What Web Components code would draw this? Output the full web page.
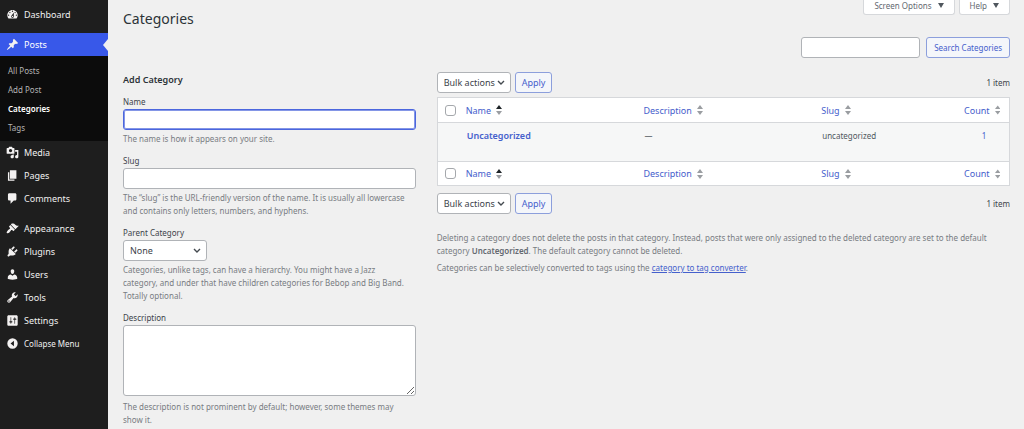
<!DOCTYPE html>
<html lang="en">
<head>
<meta charset="utf-8">
<meta name="viewport" content="width=device-width, initial-scale=1">
<title>Categories</title>
<style>
  :root {
    --bg: #f0f0f0;
    --menu: #1e1e1e;
    --submenu: #0c0c0c;
    --accent: #3858e9;
    --link: #4560cc;
    --text: #3c434a;
    --muted: #787c82;
    --field-border: #b0b3b7;
    --line: #d6d8db;
  }
  body {
    margin: 0;
    background: var(--bg);
    color: var(--text);
    font: 8px/13px "Noto Sans", "Open Sans", sans-serif;
  }
</style>
</head>
<body>
<admin-shell>
  <admin-menu slot="menu">
    <menu-item icon="dashboard" label="Dashboard"></menu-item>
    <menu-item icon="post" label="Posts" current class="gap">
      <sub-item label="All Posts"></sub-item>
      <sub-item label="Add Post"></sub-item>
      <sub-item label="Categories" current></sub-item>
      <sub-item label="Tags"></sub-item>
    </menu-item>
    <menu-item icon="media" label="Media"></menu-item>
    <menu-item icon="page" label="Pages"></menu-item>
    <menu-item icon="comments" label="Comments"></menu-item>
    <menu-item icon="appearance" label="Appearance" class="gap"></menu-item>
    <menu-item icon="plugins" label="Plugins"></menu-item>
    <menu-item icon="users" label="Users"></menu-item>
    <menu-item icon="tools" label="Tools"></menu-item>
    <menu-item icon="settings" label="Settings"></menu-item>
    <menu-item icon="collapse" label="Collapse Menu" small></menu-item>
  </admin-menu>

  <page-head slot="head" heading="Categories"></page-head>
  <search-box slot="search"></search-box>

  <add-form slot="form" heading="Add Category">
    <form-field label="Name" active>The name is how it appears on your site.</form-field>
    <form-field label="Slug">The “slug” is the URL-friendly version of the name. It is usually all lowercase and contains only letters, numbers, and hyphens.</form-field>
    <form-field label="Parent Category" type="select" value="None">Categories, unlike tags, can have a hierarchy. You might have a Jazz category, and under that have children categories for Bebop and Big Band. Totally optional.</form-field>
    <form-field label="Description" type="textarea">The description is not prominent by default; however, some themes may show it.</form-field>
  </add-form>

  <bulk-nav slot="list"></bulk-nav>
  <category-table slot="list"></category-table>
  <bulk-nav slot="list"></bulk-nav>
  <list-notes slot="list"></list-notes>
</admin-shell>

<script>
const ICONS = {
  dashboard: 'M3.76 16h12.48c1.1-1.37 1.76-3.11 1.76-5 0-4.42-3.58-8-8-8s-8 3.58-8 8c0 1.89.66 3.63 1.76 5zM10 4c.55 0 1 .45 1 1s-.45 1-1 1-1-.45-1-1 .45-1 1-1zM6 6c.55 0 1 .45 1 1s-.45 1-1 1-1-.45-1-1 .45-1 1-1zm8 0c.55 0 1 .45 1 1s-.45 1-1 1-1-.45-1-1 .45-1 1-1zm-5.37 5.55L12 7v6c0 1.1-.9 2-2 2s-2-.9-2-2c0-.57.24-1.08.63-1.45zM4 10c.55 0 1 .45 1 1s-.45 1-1 1-1-.45-1-1 .45-1 1-1zm12 0c.55 0 1 .45 1 1s-.45 1-1 1-1-.45-1-1 .45-1 1-1zm-5 3c0-.55-.45-1-1-1s-1 .45-1 1 .45 1 1 1 1-.45 1-1z',
  post: 'M10.44 3.02l1.82-1.82 6.36 6.35-1.83 1.82c-1.05-.68-2.48-.57-3.41.36l-.75.75c-.92.93-1.04 2.35-.35 3.41l-1.83 1.82-2.41-2.41-2.8 2.79c-.42.42-3.38 2.71-3.8 2.29s1.86-3.39 2.28-3.81l2.79-2.79L4.1 9.36l1.83-1.82c1.05.69 2.48.57 3.4-.36l.75-.75c.93-.92 1.05-2.35.36-3.41z',
  media: 'M13 11V4c0-.55-.45-1-1-1h-1.67L9 1H5L3.67 3H2c-.55 0-1 .45-1 1v7c0 .55.45 1 1 1h10c.55 0 1-.45 1-1zM7 4.5c1.38 0 2.5 1.12 2.5 2.5S8.38 9.5 7 9.5 4.5 8.38 4.5 7 5.62 4.5 7 4.5zM14 6h5v10.5c0 1.38-1.12 2.5-2.5 2.5S14 17.88 14 16.5s1.12-2.5 2.5-2.5c.17 0 .34.02.5.05V9h-3V6zm-4 8.05V13h2v3.5c0 1.38-1.12 2.5-2.5 2.5S7 17.88 7 16.5 8.12 14 9.5 14c.17 0 .34.02.5.05z',
  page: 'M6 15V2h10v13H6zm-1 1h8v2H3V5h2v11z',
  comments: 'M5 2h9c1.1 0 2 .9 2 2v7c0 1.1-.9 2-2 2h-2l-5 5v-5H5c-1.1 0-2-.9-2-2V4c0-1.1.9-2 2-2z',
  appearance: 'M14.48 11.06L7.41 3.99l1.5-1.5c.5-.56 2.3-.47 3.51.32 1.21.8 1.43 1.28 2.91 2.1 1.18.64 2.45 1.26 4.45.85zm-.71.71L6.7 4.7 4.93 6.47c-.39.39-.39 1.02 0 1.41l1.06 1.06c.39.39.39 1.03 0 1.42-.6.6-1.43 1.11-2.21 1.69-.35.26-.7.53-1.01.84C1.43 14.23.4 16.08 1.4 17.07c.99 1 2.84-.03 4.18-1.36.31-.31.58-.66.85-1.02.57-.78 1.08-1.61 1.69-2.21.39-.39 1.02-.39 1.41 0l1.06 1.06c.39.39 1.02.39 1.41 0z',
  plugins: 'M13.11 4.36L9.87 7.6 8 5.73l3.24-3.24c.35-.34 1.05-.2 1.56.32.52.51.66 1.21.31 1.55zm-8 1.77l.91-1.12 9.01 9.01-1.19.84c-.71.71-2.63 1.16-3.82 1.16H6.14L4.9 17.26c-.59.59-1.54.59-2.12 0-.59-.58-.59-1.53 0-2.12l1.24-1.24v-3.88c0-1.13.4-3.19 1.09-3.89zm7.26 3.97l3.24-3.24c.34-.35 1.04-.21 1.55.31.52.51.66 1.21.31 1.55l-3.24 3.25z',
  users: 'M10 9.25c-2.27 0-2.73-3.44-2.73-3.44C7 4.02 7.82 2 9.97 2c2.16 0 2.98 2.02 2.71 3.81 0 0-.41 3.44-2.68 3.44zm0 2.57L12.72 10c2.39 0 4.52 2.33 4.52 4.53v2.49s-3.65 1.13-7.24 1.13c-3.65 0-7.24-1.13-7.24-1.13v-2.49c0-2.25 1.94-4.48 4.47-4.48z',
  tools: 'M16.68 9.77c-1.34 1.34-3.3 1.67-4.95.99l-5.41 6.52c-.99.99-2.59.99-3.58 0s-.99-2.59 0-3.57l6.52-5.42c-.68-1.65-.35-3.61.99-4.95 1.28-1.28 3.12-1.62 4.72-1.06l-2.89 2.89 2.82 2.82 2.86-2.87c.53 1.58.18 3.39-1.08 4.65zM3.81 16.21c.4.39 1.04.39 1.43 0 .4-.4.4-1.04 0-1.43-.39-.4-1.03-.4-1.43 0-.39.39-.39 1.03 0 1.43z',
  settings: 'M18 16V4c0-1.1-.9-2-2-2H4c-1.1 0-2 .9-2 2v12c0 1.1.9 2 2 2h12c1.1 0 2-.9 2-2zM8 11h1c.55 0 1 .45 1 1s-.45 1-1 1H8v1.5c0 .28-.22.5-.5.5s-.5-.22-.5-.5V13H6c-.55 0-1-.45-1-1s.45-1 1-1h1V5.5c0-.28.22-.5.5-.5s.5.22.5.5V11zm5-2h-1c-.55 0-1-.45-1-1s.45-1 1-1h1V5.5c0-.28.22-.5.5-.5s.5.22.5.5V7h1c.55 0 1 .45 1 1s-.45 1-1 1h-1v5.5c0 .28-.22.5-.5.5s-.5-.22-.5-.5V9z',
  collapse: 'M10 2a8 8 0 1 0 0 16 8 8 0 0 0 0-16zM12.2 5.8v8.4L7 10z'
};

/* Look of text boxes, drop-downs and buttons, shared by several elements */
const CONTROLS = `
  * { box-sizing: border-box; }
  input[type=text], input[type=search], textarea, select {
    display: block; width: 100%; height: 21px; margin: 0; padding: 0 6px;
    border: 1px solid var(--field-border); border-radius: 3px;
    background: #fff; color: var(--text); font: inherit; outline: none;
  }
  select {
    appearance: none; font-size: 9px; line-height: 19px; padding: 0 14px 0 6px;
    background: #fff url("data:image/svg+xml,%3Csvg xmlns='http://www.w3.org/2000/svg' viewBox='0 0 8 6'%3E%3Cpath d='M1 1l3 3 3-3' fill='none' stroke='%23444a50' stroke-width='1.4'/%3E%3C/svg%3E") no-repeat right 5px center / 8px 6px;
  }
  button.secondary {
    height: 21px; margin: 0; padding: 0 6px; border: 1px solid #8c9fdc; border-radius: 3px;
    background: #f4f6fa; color: var(--link); font: inherit; white-space: nowrap;
  }
`;

class Base extends HTMLElement {
  connectedCallback() {
    if (this.shadowRoot) return;
    this.attachShadow({ mode: 'open' }).innerHTML = this.render();
  }
  attr(name) { return this.getAttribute(name) || ''; }
}

customElements.define('admin-shell', class extends Base {
  render() { return `<style>
    :host { display: grid; grid-template-columns: 108px minmax(0, 1fr); min-height: 100vh; }
    nav { background: var(--menu); }
    main { padding: 0 14px 0 15px; }
    .columns { display: grid; grid-template-columns: 33% minmax(0, 1fr); column-gap: 21px; margin-top: 14px; }
    </style>
    <nav aria-label="Main menu"><slot name="menu"></slot></nav>
    <main>
      <slot name="head"></slot>
      <slot name="search"></slot>
      <div class="columns">
        <div><slot name="form"></slot></div>
        <div><slot name="list"></slot></div>
      </div>
    </main>`; }
});

customElements.define('admin-menu', class extends Base {
  render() { return `<style>
    :host { display: flex; flex-direction: column; padding-top: 3px; }
    ::slotted(.gap) { margin-top: 7px; }
    </style><slot></slot>`; }
});

customElements.define('menu-item', class extends Base {
  render() {
    const current = this.hasAttribute('current');
    const small = this.hasAttribute('small');
    return `<style>
    :host { display: block; }
    .row { position: relative; display: flex; align-items: center; gap: 5px; box-sizing: border-box;
      width: 100%; height: 23px; padding: 0 6px; border: 0; background: none;
      color: #f0f0f0; font: inherit; font-size: 9px; text-align: left; text-decoration: none; }
    .small { font-size: 8px; }
    .current { background: var(--accent); color: #fff; }
    .current::after { content: ""; position: absolute; right: 0; top: 6px;
      border: solid transparent; border-width: 6px 5px 6px 0; border-right-color: var(--bg); }
    svg { width: 13px; height: 13px; flex: none; fill: #f3f1f1; }
    .sub { background: var(--submenu); padding: 5px 0 4px; }
    </style>
    ${small ? '<button type="button" class="row small">' : `<a href="#" class="row ${current ? 'current' : ''}">`}
      <svg viewBox="0 0 20 20" aria-hidden="true"><path fill-rule="evenodd" d="${ICONS[this.attr('icon')]}"/></svg>
      <span>${this.attr('label')}</span>
    ${small ? '</button>' : '</a>'}
    ${current ? '<div class="sub"><slot></slot></div>' : ''}`;
  }
});

customElements.define('sub-item', class extends Base {
  render() { return `<style>
    :host { display: block; }
    a { display: block; padding: 0 8px; line-height: 19px; color: #b4b4b4; text-decoration: none; }
    :host([current]) a { color: #fff; font-weight: 600; }
    </style><a href="#">${this.attr('label')}</a>`; }
});

customElements.define('page-head', class extends Base {
  render() { return `<style>
    :host { display: flex; justify-content: space-between; align-items: flex-start; }
    h1 { margin: 0; padding-top: 8px; font-size: 14px; line-height: 21px; font-weight: 400; color: #2c3338; }
    .tabs { display: flex; gap: 4px; }
    button { display: flex; align-items: center; gap: 6px; height: 15px; padding: 0 10px 4px;
      border: 1px solid var(--line); border-top: 0; border-radius: 0 0 3px 3px;
      background: #fff; color: #646970; font: inherit; line-height: 11px; }
    svg { width: 6px; height: 5px; fill: #50575e; }
    </style>
    <h1>${this.attr('heading')}</h1>
    <div class="tabs">
      ${['Screen Options', 'Help'].map(t => `<button type="button">${t}<svg viewBox="0 0 6 5" aria-hidden="true"><path d="M0 0h6L3 5z"/></svg></button>`).join('')}
    </div>`; }
});

customElements.define('search-box', class extends Base {
  render() { return `<style>${CONTROLS}
    :host { display: block; margin-top: 8px; }
    form { display: flex; justify-content: flex-end; gap: 6px; }
    input[type=search] { width: 119px; }
    button.secondary { padding: 0 7px; }
    </style>
    <form><input type="search" aria-label="Search Categories"><button type="button" class="secondary">Search Categories</button></form>`; }
});

customElements.define('add-form', class extends Base {
  render() { return `<style>
    :host { display: block; }
    h2 { margin: 0 0 8px; font-size: 9px; line-height: 15px; font-weight: 600; color: #2c3338; }
    form { display: flex; flex-direction: column; gap: 9px; }
    </style>
    <h2>${this.attr('heading')}</h2><form><slot></slot></form>`; }
});

customElements.define('form-field', class extends Base {
  render() {
    const type = this.attr('type');
    const control = type === 'select' ? `<select id="f"><option>${this.attr('value')}</option></select>`
      : type === 'textarea' ? '<textarea id="f"></textarea>'
      : `<input id="f" type="text"${this.hasAttribute('active') ? ' class="active"' : ''}>`;
    return `<style>${CONTROLS}
    :host { display: block; }
    label { display: block; margin-bottom: 1px; }
    input.active { border-color: #4b66de; box-shadow: inset 0 0 0 1px #8496e6; }
    select { width: 84px; }
    textarea { height: 71px; resize: vertical; }
    p { margin: 2px 0 0; padding-right: 8px; color: var(--muted); }
    textarea + p { margin-top: 4px; }
    </style>
    <label for="f">${this.attr('label')}</label>${control}<p><slot></slot></p>`;
  }
});

customElements.define('bulk-nav', class extends Base {
  render() { return `<style>${CONTROLS}
    :host { display: flex; align-items: center; gap: 4px; }
    select { width: 74px; }
    button.secondary { font-size: 9px; }
    span { margin-left: auto; }
    </style>
    <select aria-label="Bulk actions"><option>Bulk actions</option></select>
    <button type="button" class="secondary">Apply</button>
    <span>1 item</span>`; }
});

customElements.define('category-table', class extends Base {
  head() {
    const col = (name, cls = '') => `<th class="${cls}"><a href="#">${name}<svg viewBox="0 0 6 10" aria-hidden="true"><path class="up" d="M0 4l3-4 3 4z"/><path d="M0 6h6L3 10z"/></svg></a></th>`;
    return `<tr><td class="check"><input type="checkbox" aria-label="Select all"></td>${col('Name', 'sorted')}${col('Description')}${col('Slug')}${col('Count', 'count')}</tr>`;
  }
  render() { return `<style>
    :host { display: block; margin: 4px 0 7px; }
    table { width: 100%; table-layout: fixed; border-collapse: separate; border-spacing: 0;
      border: 1px solid var(--line); background: #fff; }
    .c-check { width: 23px; } .c-slug { width: 25%; } .c-count { width: 50px; }
    th, td { padding: 0 5px; text-align: left; font-weight: 400; }
    thead tr { height: 25px; font-size: 9px; }
    tfoot tr { height: 24px; font-size: 9px; }
    thead th, thead td { border-bottom: 1px solid var(--line); }
    tfoot th, tfoot td { border-top: 1px solid var(--line); }
    tbody td, tbody th { height: 38px; box-sizing: border-box; padding: 6px 6px 0; background: #f6f7f7;
      color: #50575e; vertical-align: top; }
    a { color: var(--link); text-decoration: none; }
    thead a, tfoot a { display: flex; align-items: center; gap: 5px; }
    .count a { justify-content: flex-end; padding-right: 4px; }
    tbody .title a { font-size: 9px; font-weight: 600; }
    tbody .count { text-align: center; }
    tbody .count a { padding: 0; }
    svg { width: 6px; height: 10px; fill: #9a9da1; }
    .sorted .up { fill: #1d2327; }
    .check { padding: 0 0 0 7px; }
    input { appearance: none; display: block; box-sizing: border-box; width: 11px; height: 11px; margin: 0;
      border: 1px solid #a5a8ac; border-radius: 3px; background: #fff; }
    </style>
    <table>
      <colgroup><col class="c-check"><col><col><col class="c-slug"><col class="c-count"></colgroup>
      <thead>${this.head()}</thead>
      <tbody><tr><td></td><th scope="row" class="title"><a href="#">Uncategorized</a></th><td>—</td><td>uncategorized</td><td class="count"><a href="#">1</a></td></tr></tbody>
      <tfoot>${this.head()}</tfoot>
    </table>`; }
});

customElements.define('list-notes', class extends Base {
  render() { return `<style>
    :host { display: block; margin-top: 17px; color: var(--muted); }
    p { margin: 0 0 4px; }
    strong { font-weight: 600; color: #646970; }
    a { color: var(--link); }
    </style>
    <p>Deleting a category does not delete the posts in that category. Instead, posts that were only assigned to the deleted category are set to the default category <strong>Uncategorized</strong>. The default category cannot be deleted.</p>
    <p>Categories can be selectively converted to tags using the <a href="#">category to tag converter</a>.</p>`; }
});
</script>
</body>
</html>
